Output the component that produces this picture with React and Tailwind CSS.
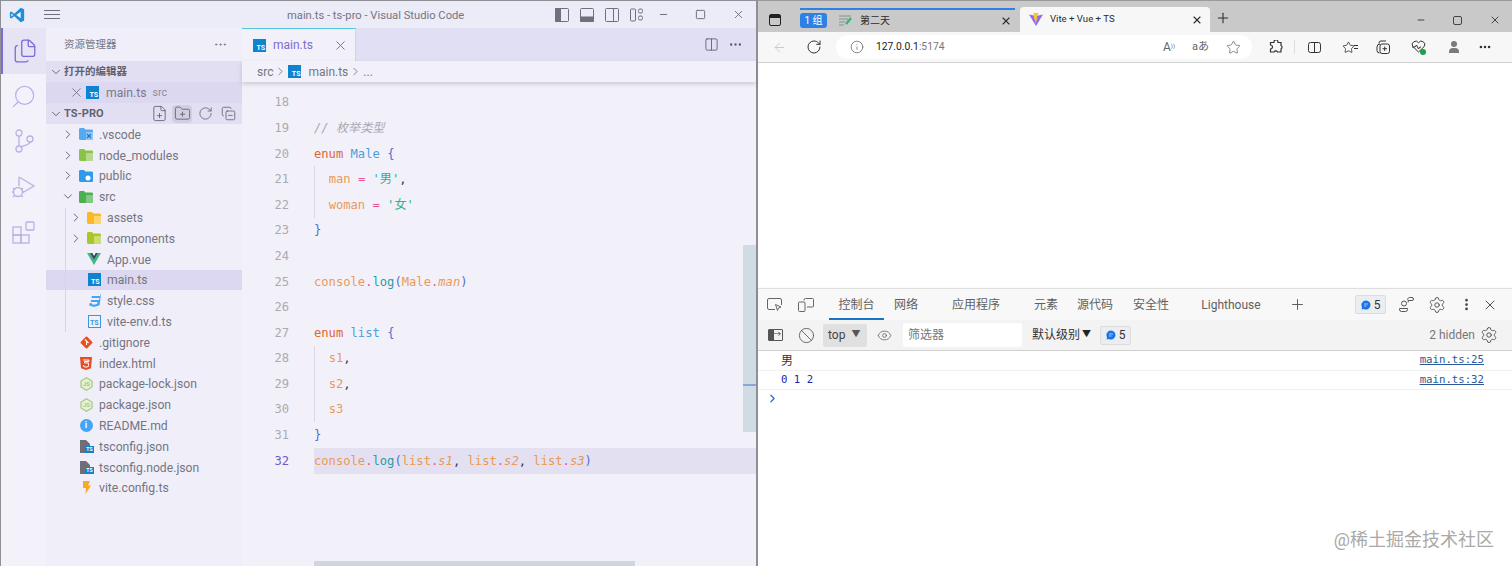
import {
  ArrowLeft, Ban, ChevronDown, ChevronRight, Columns2, CopyMinus, Ellipsis, EllipsisVertical, Eye,
  Files, FilePlus, FolderPlus, Info, Minus, MoreHorizontal, Plus, RotateCw, Search, Settings, Square, Star, X,
} from 'lucide-react';

const ui = { fontFamily: 'Roboto, "Noto Sans CJK SC", sans-serif' };
const mono = { fontFamily: '"DejaVu Sans Mono", "Noto Sans CJK SC", monospace' };

// ---- small drawn icons ----
const VsCodeLogo = () => (
  <svg width="16" height="16" viewBox="0 0 24 24">
    <path d="M17.5 1 8 10.2 3.4 6.7 1.3 7.8v8.4l2.1 1.1L8 13.8 17.5 23l5.2-2.2V3.2z" fill="#1f8fdc" />
    <path d="M17.5 7 11 12l6.5 5z" fill="#f2f1f9" />
    <path d="M3.5 9.2v5.6L6.3 12z" fill="#f2f1f9" />
  </svg>
);

const TsIcon = ({ outline }) => (
  <span
    className={`flex h-[13px] w-[13px] items-end justify-end pr-[1px] text-[7px] leading-[8px] font-bold ${
      outline ? 'border border-[#3a96dd] text-[#3a96dd]' : 'bg-[#0d84cf] text-white'
    }`}
  >
    TS
  </span>
);

const Folder = ({ color, tab, children }) => (
  <svg width="14" height="12" viewBox="0 0 14 12">
    <path d="M0 1.5C0 .7.5 0 1.3 0H5l1.4 1.6h6.2c.8 0 1.4.6 1.4 1.4v7.6c0 .8-.6 1.4-1.4 1.4H1.3C.5 12 0 11.4 0 10.6z" fill={color} />
    <path d="M7 4h7v6.6c0 .8-.6 1.4-1.4 1.4H7z" fill={tab} />
    {children}
  </svg>
);

const VueIcon = () => (
  <svg width="14" height="12" viewBox="0 0 14 12">
    <path d="M0 0h3l4 7 4-7h3L7 12z" fill="#41b883" />
    <path d="M3 0h2.3L7 3l1.7-3H11L7 7z" fill="#35495e" />
  </svg>
);

const CssIcon = () => (
  <svg width="13" height="13" viewBox="0 0 13 13">
    <path d="M1.5 0h11l-.4 2H3.800l-.3 2h8l-.4 2H3l-.3 2h6.800l-.3 1.800-3 .9-2.600-.8.1-1H1.600l-.4 2.600L6 13l5.600-1.800L13 0z" fill="#42a5f5" />
  </svg>
);

const GitIcon = () => (
  <svg width="13" height="13" viewBox="0 0 13 13">
    <rect x="2" y="2" width="9" height="9" rx="1" transform="rotate(45 6.5 6.500)" fill="#e6501f" />
    <path d="M5 3.500 8.500 7M6.500 5.500V9" stroke="#fff" strokeWidth="1.100" />
  </svg>
);

const HtmlIcon = () => (
  <svg width="12" height="13" viewBox="0 0 12 13">
    <path d="M0 0h12l-1 11.200L6 13 1 11.200z" fill="#e44d26" />
    <path d="M3 3h6l-.2 1.500H4.500l.1 1.500h4L8.300 9.500 6 10.200 3.700 9.500 3.600 8" fill="none" stroke="#fff" strokeWidth="1" />
  </svg>
);

const NodeIcon = () => (
  <svg width="13" height="14" viewBox="0 0 13 14">
    <path d="M6.500.8 12 4v6l-5.500 3.200L1 10V4z" fill="#e6efd8" stroke="#a6c97f" strokeWidth="1.200" />
    <text x="6.500" y="9.300" textAnchor="middle" fontSize="6" fontWeight="700" fill="#a6c97f">JS</text>
  </svg>
);

const ReadmeIcon = () => (
  <span className="flex h-[13px] w-[13px] items-center justify-center rounded-full bg-[#42a5f5] text-[9px] leading-none font-bold text-white">
    i
  </span>
);

const TsConfigIcon = () => (
  <span className="relative block h-[13px] w-[13px]">
    <svg width="10" height="13" viewBox="0 0 10 13">
      <path d="M0 0h6l4 4v9H0z" fill="#6e6e78" />
    </svg>
    <span className="absolute right-[-1px] bottom-0 bg-[#0d84cf] px-[1px] text-[5px] leading-[7px] font-bold text-white">TS</span>
  </span>
);

const BoltIcon = () => (
  <svg width="9" height="13" viewBox="0 0 9 13">
    <path d="M1 0h7L6 4.500h3L3.500 13 4 7H1z" fill="#f9a825" />
  </svg>
);

const SourceControl = () => (
  <svg width="26" height="26" viewBox="0 0 26 26" fill="none" stroke="#b9b0e6" strokeWidth="1.300">
    <circle cx="8" cy="5" r="3" />
    <circle cx="8" cy="21" r="3" />
    <circle cx="19" cy="11" r="3" />
    <path d="M8 8v10M19 14c0 3-5 3-10 5" />
  </svg>
);

const DebugIcon = () => (
  <svg width="26" height="26" viewBox="0 0 26 26" fill="none" stroke="#b9b0e6" strokeWidth="1.300">
    <path d="M8 3v9M8 3l15 9-11 6.500" />
    <circle cx="7" cy="18" r="4.500" />
    <path d="M2 14l2 2M12 14l-2 2M1 18h2M11 18h2M2 23l2-2M12 23l-2-2" />
  </svg>
);

const Extensions = () => (
  <svg width="24" height="24" viewBox="0 0 24 24" fill="none" stroke="#b9b0e6" strokeWidth="1.300">
    <rect x="1" y="6" width="8" height="8" />
    <rect x="1" y="14" width="8" height="8" />
    <rect x="9" y="14" width="8" height="8" />
    <rect x="14" y="1" width="8" height="8" rx="1" />
  </svg>
);

const LayoutIcon = ({ children }) => (
  <svg width="14" height="14" viewBox="0 0 14 14" fill="none" stroke="#6f6f7d" strokeWidth="1">
    <rect x=".5" y=".5" width="13" height="13" rx="1" />
    {children}
  </svg>
);

const ViteIcon = () => (
  <svg width="14" height="14" viewBox="0 0 14 14">
    <path d="M0 1.500 7 13 14 1.500 7 3z" fill="#8f6bf0" />
    <path d="M4.500 0 9.500 0 7.500 5.500l1.300-.2L6 11l.5-4.500-1.300.3z" fill="#fbc531" />
  </svg>
);

// ---- vs code sidebar ----
const tree = [
  { name: '.vscode', depth: 0, arrow: 'right', icon: <Folder color="#56a9ef" tab="#8fc6f3"><path d="M8 6l4 4M12 6l-4 4" stroke="#1976d2" strokeWidth="1.200" /></Folder> },
  { name: 'node_modules', depth: 0, arrow: 'right', icon: <Folder color="#8bc34a" tab="#b7d98f" /> },
  { name: 'public', depth: 0, arrow: 'right', icon: <Folder color="#2f9bea" tab="#2f9bea"><circle cx="9" cy="8" r="2.500" fill="#fff" /></Folder> },
  { name: 'src', depth: 0, arrow: 'down', icon: <Folder color="#4caf50" tab="#83c985" /> },
  { name: 'assets', depth: 1, arrow: 'right', icon: <Folder color="#fbb726" tab="#fdd56f" /> },
  { name: 'components', depth: 1, arrow: 'right', icon: <Folder color="#a9c72a" tab="#cdde70" /> },
  { name: 'App.vue', depth: 1, icon: <VueIcon /> },
  { name: 'main.ts', depth: 1, active: true, icon: <TsIcon /> },
  { name: 'style.css', depth: 1, icon: <CssIcon /> },
  { name: 'vite-env.d.ts', depth: 1, icon: <TsIcon outline /> },
  { name: '.gitignore', depth: 0, icon: <GitIcon /> },
  { name: 'index.html', depth: 0, icon: <HtmlIcon /> },
  { name: 'package-lock.json', depth: 0, icon: <NodeIcon /> },
  { name: 'package.json', depth: 0, icon: <NodeIcon /> },
  { name: 'README.md', depth: 0, icon: <ReadmeIcon /> },
  { name: 'tsconfig.json', depth: 0, icon: <TsConfigIcon /> },
  { name: 'tsconfig.node.json', depth: 0, icon: <TsConfigIcon /> },
  { name: 'vite.config.ts', depth: 0, icon: <BoltIcon /> },
];

const TreeRow = ({ row }) => (
  <div className={`flex h-[20.8px] items-center text-[12.200px] text-[#757582] ${row.active ? 'bg-[#dcd8f1]' : ''} ${row.depth ? 'pl-[23px]' : 'pl-[15px]'}`}>
    <span className="flex w-[14px] justify-center text-[#5f5f6d]">
      {row.arrow === 'right' && <ChevronRight size={15} strokeWidth={1.6} />}
      {row.arrow === 'down' && <ChevronDown size={15} strokeWidth={1.6} />}
    </span>
    <span className="mr-[6px] ml-[4px] flex w-[14px] items-center justify-center">{row.icon}</span>
    <span className="pt-[1px]">{row.name}</span>
  </div>
);

const Sidebar = () => (
  <aside className="w-[196px] shrink-0 bg-[#f0eff9]">
    <div className="flex h-[33px] items-center justify-between pr-[14px] pl-[18px] text-[10.500px] text-[#757582]">
      <span>资源管理器</span>
      <Ellipsis size={15} strokeWidth={1.6} />
    </div>
    <div className="flex h-[21px] items-center bg-[#e2dff3] pl-[3px] text-[10.500px] font-bold text-[#62626f]">
      <ChevronDown size={14} strokeWidth={1.6} className="mr-[1px]" />
      打开的编辑器
    </div>
    <div className="flex h-[21px] items-center bg-[#dcd8f1] pl-[23px] text-[12.200px] text-[#7a7a88]">
      <X size={15} strokeWidth={1.5} />
      <span className="mr-[7px] ml-[2px]"><TsIcon /></span>
      <span className="pt-[1px]">main.ts</span>
      <span className="ml-[6px] pt-[1px] text-[10.500px] text-[#8d8d99]">src</span>
    </div>
    <div className="flex h-[21px] items-center bg-[#e2dff3] pl-[3px] text-[11px] font-bold text-[#62626f]">
      <ChevronDown size={14} strokeWidth={1.6} className="mr-[1px]" />
      <span className="pt-[1px]">TS-PRO</span>
      <span className="ml-auto flex items-center gap-[3px] pr-[4px] text-[#5f5f6d]">
        <span className="flex h-[18px] w-[20px] items-center justify-center"><FilePlus size={17} strokeWidth={1.2} /></span>
        <span className="flex h-[18px] w-[20px] items-center justify-center rounded-[4px] bg-[#d0cee0]"><FolderPlus size={17} strokeWidth={1.2} /></span>
        <span className="flex h-[18px] w-[20px] items-center justify-center"><RotateCw size={15} strokeWidth={1.3} /></span>
        <span className="flex h-[18px] w-[20px] items-center justify-center"><CopyMinus size={15} strokeWidth={1.3} /></span>
      </span>
    </div>
    <div className="relative">
      {tree.map((row) => <TreeRow key={row.name} row={row} />)}
      <span className="absolute top-[84px] left-[19px] h-[124px] w-px bg-[#d6d5e0]" />
    </div>
  </aside>
);

// ---- vs code editor ----
const O = 'text-[#e99a57]';
const K = 'text-[#e0662e]';
const B = 'text-[#4c9fdc]';
const P = 'text-[#e8559a]';
const G = 'text-[#2bb48c]';
const L = 'text-[#4f6fd6]';
const T = 'text-[#2d9aa6]';
const D = 'text-[#3a3a4a]';

const log = (args) => (
  <>
    <span className={O}>console</span><span className={P}>.</span><span className={T}>log</span><span className={L}>(</span>
    {args}
    <span className={L}>)</span>
  </>
);

const member = (obj, prop) => (
  <>
    <span className={O}>{obj}</span><span className={P}>.</span><span className={`${O} italic`}>{prop}</span>
  </>
);

const lines = [
  { n: 18 },
  { n: 19, code: <span className="text-[#a8a8b4] italic">// 枚举类型</span> },
  { n: 20, code: <><span className={K}>enum</span> <span className={B}>Male</span> <span className={L}>{'{'}</span></> },
  { n: 21, guide: true, code: <>  <span className={O}>man</span> <span className={P}>=</span> <span className={G}>'男'</span><span className={D}>,</span></> },
  { n: 22, guide: true, code: <>  <span className={O}>woman</span> <span className={P}>=</span> <span className={G}>'女'</span></> },
  { n: 23, code: <span className={L}>{'}'}</span> },
  { n: 24 },
  { n: 25, code: log(member('Male', 'man')) },
  { n: 26 },
  { n: 27, code: <><span className={K}>enum</span> <span className={B}>list</span> <span className={L}>{'{'}</span></> },
  { n: 28, guide: true, code: <>  <span className={O}>s1</span><span className={D}>,</span></> },
  { n: 29, guide: true, code: <>  <span className={O}>s2</span><span className={D}>,</span></> },
  { n: 30, guide: true, code: <>  <span className={O}>s3</span></> },
  { n: 31, code: <span className={L}>{'}'}</span> },
  { n: 32, current: true, code: log(<>{member('list', 's1')}<span className={D}>, </span>{member('list', 's2')}<span className={D}>, </span>{member('list', 's3')}</>) },
];

const CodeLine = ({ line }) => (
  <div className="flex h-[25.6px] items-center text-[12.15px] whitespace-pre" style={mono}>
    <span className={`w-[47px] shrink-0 text-right ${line.current ? 'text-[#6a5acd]' : 'text-[#aaaab4]'}`}>{line.n}</span>
    <span className={`ml-[25px] flex h-full flex-1 items-center ${line.current ? 'bg-[#e3e0f2]' : ''} ${line.guide ? 'border-l border-[#d9d9e2]' : ''}`}>
      <span className={line.guide ? 'ml-[-1px]' : ''}>{line.code}</span>
    </span>
  </div>
);

const Editor = () => (
  <main className="relative flex min-w-0 flex-1 flex-col bg-[#f2f1f9]">
    <div className="flex h-[33px] shrink-0 items-center bg-[#e1dff3]">
      <div className="flex h-full w-[114px] items-center border-t border-r border-t-[#56c6dd] border-r-[#d4d1ea] bg-[#f2f1f9] pl-[11px] text-[12px] text-[#7c6bd6]">
        <TsIcon />
        <span className="ml-[7px] w-[39px]">main.ts</span>
        <X size={15} strokeWidth={1.6} className="ml-[21px]" />
      </div>
      <div className="ml-auto flex items-center gap-[9px] pr-[13px] text-[#5f5f6d]">
        <Columns2 size={15} strokeWidth={1.4} />
        <MoreHorizontal size={15} strokeWidth={1.8} />
      </div>
    </div>
    <div className="z-10 flex h-[21px] shrink-0 items-center bg-[#f2f1f9] pl-[15px] text-[12px] text-[#757582] shadow-[0_2px_4px_rgba(90,90,110,0.25)]">
      src
      <ChevronRight size={13} strokeWidth={1.6} className="mx-[1px]" />
      <TsIcon />
      <span className="ml-[7px]">main.ts</span>
      <ChevronRight size={13} strokeWidth={1.6} className="mx-[1px]" />
      ...
    </div>
    <div className="min-h-0 flex-1 overflow-hidden pt-[7.700px]">
      {lines.map((line) => <CodeLine key={line.n} line={line} />)}
    </div>
    <span className="absolute top-[217px] right-0 h-[187px] w-[13px] bg-[#cfdce4]" />
    <span className="absolute top-[356px] right-0 h-[2px] w-[13px] bg-[#8aa6d8]" />
    <span className="absolute bottom-0 left-[72px] h-[5px] w-[321px] bg-[#cfd6e0]" />
  </main>
);

const VsCode = () => (
  <section className="flex h-full w-[758px] shrink-0 flex-col border-t border-r-2 border-l border-[#8f8f96]" style={ui}>
    <header className="flex h-[27px] shrink-0 items-center bg-[#ecebf8] text-[11.200px] text-[#757582]">
      <span className="ml-[8px]"><VsCodeLogo /></span>
      <span className="ml-[19px] flex w-[16px] flex-col gap-[3px]">
        <i className="h-px bg-[#6e6e7c]" /><i className="h-px bg-[#6e6e7c]" /><i className="h-px bg-[#6e6e7c]" />
      </span>
      <span className="ml-[227px] w-[190px] pt-[3px] whitespace-nowrap">main.ts - ts-pro - Visual Studio Code</span>
      <span className="ml-[78px] flex items-center gap-[11px]">
        <LayoutIcon><path d="M.5.5h5v13h-5z" fill="#6f6f7d" /></LayoutIcon>
        <LayoutIcon><path d="M.5 9h13v4.500H.5z" fill="#6f6f7d" /></LayoutIcon>
        <LayoutIcon><path d="M8.500.5v13" /></LayoutIcon>
        <svg width="14" height="14" viewBox="0 0 14 14" fill="none" stroke="#6f6f7d">
          <rect x=".5" y="1" width="5" height="12" rx="1" />
          <rect x="8.500" y="1" width="4" height="4" rx="1.500" />
          <rect x="8.500" y="8" width="4" height="4" rx="1.500" />
        </svg>
      </span>
      <span className="ml-[14px] flex items-center gap-[26px] text-[#666672]">
        <Minus size={11} strokeWidth={2} />
        <Square size={11} strokeWidth={2} />
        <X size={13} strokeWidth={1.6} />
      </span>
    </header>
    <div className="flex min-h-0 flex-1">
      <nav className="flex w-[45px] shrink-0 flex-col items-center bg-[#f3f2fb]">
        <div className="flex h-[46px] w-full items-center justify-center border-l-2 border-[#7c6bd6] bg-[#e6e3f5]">
          <Files size={26} strokeWidth={1.2} className="text-[#7c6bd6]" />
        </div>
        <div className="flex h-[44px] items-center justify-center"><Search size={27} strokeWidth={1.1} className="-scale-x-100 text-[#b9b0e6]" /></div>
        <div className="flex h-[46px] items-center justify-center"><SourceControl /></div>
        <div className="flex h-[46px] items-center justify-center"><DebugIcon /></div>
        <div className="flex h-[46px] items-center justify-center"><Extensions /></div>
      </nav>
      <Sidebar />
      <Editor />
    </div>
  </section>
);

// ---- browser ----
const Browser = () => (
  <section className="flex h-full min-w-0 flex-1 flex-col bg-white" style={ui}>
    <div className="flex h-[32px] shrink-0 items-end border-t border-[#9a9a9a] bg-[#c9c9c9] text-[10px] text-[#2c2c2c]">
      <span className="mb-[6px] ml-[11px] flex h-[12px] w-[12px] flex-col rounded-[2px] border border-[#222]"><i className="h-[3px] bg-[#222]" /></span>
      <div className="relative mb-0 ml-[19px] flex h-[23px] w-[215px] items-center">
        <span className="absolute top-[-1px] right-0 left-0 h-[2px] bg-[#2f80e4]" />
        <span className="flex h-[15px] w-[27px] items-center justify-center rounded-[3px] bg-[#2f80e4] text-[10px] text-white">1 组</span>
        <svg width="14" height="12" viewBox="0 0 14 12" className="ml-[12px]" fill="none" stroke="#7a9a8a" strokeWidth="1.200">
          <path d="M0 1h12M0 4h9M0 7h6M0 10h5" />
          <path d="M12 3 7 9" stroke="#3cb371" strokeWidth="2.500" />
        </svg>
        <span className="ml-[7px]">第二天</span>
        <X size={12} strokeWidth={2.2} className="ml-auto mr-[3px]" />
      </div>
      <div className="ml-[5px] flex h-[25px] w-[190px] items-center rounded-t-[4px] bg-[#f7f7f7] pl-[9px]">
        <ViteIcon />
        <span className="ml-[7px] text-[9.600px]">Vite + Vue + TS</span>
        <X size={12} strokeWidth={2.2} className="ml-auto mr-[7px]" />
      </div>
      <Plus size={16} strokeWidth={1.6} className="mb-[6px] ml-[5px]" />
      <span className="mb-[6px] ml-auto flex items-center gap-[27px] pr-[11px] text-[#444]">
        <Minus size={10} strokeWidth={2.6} />
        <span className="h-[9px] w-[9px] rounded-[2px] border border-[#444]" />
        <X size={12} strokeWidth={2} />
      </span>
    </div>
    <div className="flex h-[31px] shrink-0 items-center border-b border-[#d0d0d0] bg-[#f7f7f7] text-[#4a4a4a]">
      <ArrowLeft size={15} strokeWidth={1.4} className="ml-[14px] text-[#c4c4c4]" />
      <RotateCw size={16} strokeWidth={1.500} className="ml-[19px] text-[#333]" />
      <div className="ml-[14px] flex h-[24px] w-[416px] items-center rounded-full bg-white pl-[14px] text-[10.300px]">
        <Info size={14} strokeWidth={1.3} className="text-[#666]" />
        <span className="ml-[12px] text-[#222]">127.0.0.1<span className="text-[#777]">:5174</span></span>
        <span className="ml-auto flex items-center gap-[17px] pr-[11px] text-[#666]">
          <span className="text-[12px]">A<sup className="text-[6px]">))</sup></span>
          <span className="text-[11px]">aあ</span>
          <Star size={15} strokeWidth={1.2} />
        </span>
      </div>
      <svg width="14" height="14" viewBox="0 0 14 14" className="ml-[17px]" fill="none" stroke="#333" strokeWidth="1.200">
        <path d="M5 1.500a2 2 0 0 1 4 1h3v3a2 2 0 0 1 0 3.500v3H8.500a2 2 0 0 0-3.500 0H1.500V9a2 2 0 0 0 0-4V2.500H5z" />
      </svg>
      <span className="ml-[11px] h-[14px] w-px bg-[#ddd]" />
      <svg width="13" height="13" viewBox="0 0 13 13" className="ml-[13px]" fill="none" stroke="#333">
        <rect x=".5" y="1.500" width="12" height="10" rx="2" />
        <path d="M6.500 1.500v10" />
      </svg>
      <span className="ml-[21px] flex items-center"><Star size={13} strokeWidth={1.500} className="text-[#333]" /><span className="ml-[-1px] flex w-[4px] flex-col gap-[2px]"><i className="h-px bg-[#333]" /><i className="h-px bg-[#333]" /></span></span>
      <svg width="14" height="14" viewBox="0 0 14 14" className="ml-[18px]" fill="none" stroke="#333">
        <path d="M3 3.500V3a2 2 0 0 1 2-2h5M1 7a3 3 0 0 1 3-3M3.500 13A2.500 2.500 0 0 1 1 10.500V7" />
        <rect x="4" y="4" width="9.500" height="9.500" rx="2" />
        <path d="M8.700 6.500v4.500M6.500 8.700H11" />
      </svg>
      <span className="relative ml-[21px] block h-[14px] w-[15px]">
        <svg width="15" height="13" viewBox="0 0 15 13" fill="none" stroke="#333">
          <path d="M7.500 12 1.800 6.500a3.300 3.300 0 0 1 5.700-3.800 3.300 3.300 0 0 1 5.700 3.800z" />
          <path d="M1 7h3l1.500-2 2 4 1.500-2h1" />
        </svg>
        <span className="absolute right-[0px] bottom-[-1px] h-[6px] w-[6px] rounded-full bg-[#16a34a]" />
      </span>
      <span className="ml-[23px] flex flex-col items-center"><i className="h-[6px] w-[6px] rounded-full bg-[#7a7a7a]" /><i className="mt-[1px] h-[5px] w-[10px] rounded-t-[4px] bg-[#7a7a7a]" /></span>
      <Ellipsis size={14} strokeWidth={2.4} className="ml-[19px] text-[#333]" />
    </div>
    <div className="min-h-0 flex-1 bg-white" />
    <Devtools />
  </section>
);

const MsgBadge = () => (
  <span className="flex h-[19px] w-[31px] items-center justify-center gap-[3px] rounded-[2px] border border-[#dcdcdc] bg-[#eaeef3] text-[12px] text-[#333]">
    <svg width="10" height="10" viewBox="0 0 10 10">
      <path d="M5 .5a4.500 4.500 0 1 1-2.300 8.400L.5 9.500l.6-2.200A4.500 4.500 0 0 1 5 .5z" fill="#1a73e8" />
      <path d="M3 4h4M3 6h2.500" stroke="#eaeef3" strokeWidth=".7" />
    </svg>
    5
  </span>
);

const tabs = [
  { label: '控制台', w: 'w-[55px]', ml: 'ml-[15px]', active: true },
  { label: '网络', w: 'w-[24px]', ml: 'ml-[10px]' },
  { label: '应用程序', w: 'w-[48px]', ml: 'ml-[34px]' },
  { label: '元素', w: 'w-[24px]', ml: 'ml-[34px]' },
  { label: '源代码', w: 'w-[36px]', ml: 'ml-[19px]' },
  { label: '安全性', w: 'w-[36px]', ml: 'ml-[20px]' },
  { label: 'Lighthouse', w: 'w-[58px]', ml: 'ml-[33px]' },
];

const Devtools = () => (
  <div className="h-[278px] shrink-0">
    <div className="flex h-[32px] items-center border-t border-[#dedede] bg-[#f8f8f8] text-[12px] text-[#5f5f5f] shadow-[0_1px_3px_rgba(0,0,0,0.12)]">
      <svg width="16" height="14" viewBox="0 0 16 14" className="ml-[9px]" fill="none" stroke="#666">
        <path d="M8 11.500H2a1.500 1.500 0 0 1-1.500-1.500V2A1.500 1.500 0 0 1 2 .5h11A1.500 1.500 0 0 1 14.500 2v5" />
        <path d="M8.500 6.500 14 9l-2.500 1-1 2.500z" />
      </svg>
      <svg width="16" height="14" viewBox="0 0 16 14" className="ml-[15px]" fill="none" stroke="#666">
        <path d="M6 2.500V2A1.500 1.500 0 0 1 7.500.5h7A1 1 0 0 1 15.500 2v6a1 1 0 0 1-1 1H9" />
        <rect x=".5" y="4" width="6.500" height="9.500" rx="1" />
      </svg>
      {tabs.map((t) => (
        <span key={t.label} className={`flex h-full items-center justify-center ${t.w} ${t.ml} ${t.active ? 'border-b-2 border-[#1a73c8] pt-[2px]' : ''}`}>
          {t.label}
        </span>
      ))}
      <Plus size={17} strokeWidth={1.4} className="ml-[29px]" />
      <span className="ml-[49px]"><MsgBadge /></span>
      <svg width="16" height="16" viewBox="0 0 16 16" className="ml-[12px]" fill="none" stroke="#555">
        <circle cx="6" cy="6.500" r="2.500" />
        <path d="M1.500 11.500h8v1a2 2 0 0 1-2 2h-4a2 2 0 0 1-2-2zM10 5.500l.5-2H14a1.500 1.500 0 0 0 0-3h-2.500a2 2 0 0 0-1.500 3" />
      </svg>
      <Settings size={18} strokeWidth={1.3} className="ml-[14px] text-[#555]" />
      <EllipsisVertical size={15} strokeWidth={2.4} className="ml-[13px] text-[#444]" />
      <X size={16} strokeWidth={1.4} className="ml-[8px] text-[#444]" />
    </div>
    <div className="flex h-[31px] items-center border-b border-[#cfcfcf] bg-[#f3f3f3] text-[12px] text-[#444]">
      <span className="ml-[10px] flex h-[12px] w-[15px] items-center justify-end rounded-[1px] border border-[#555] bg-[linear-gradient(90deg,#555_35%,transparent_35%)] pr-[1px] text-[8px] leading-none">→</span>
      <Ban size={17} strokeWidth={1.2} className="ml-[15px] text-[#555]" />
      <span className="ml-[8px] flex h-[23px] w-[44px] items-center rounded-[2px] bg-[#e0e0e0] pl-[5px] text-[#444]">
        top
        <span className="ml-[6px] text-[9px] text-[#555]">▼</span>
      </span>
      <Eye size={15} strokeWidth={1.3} className="ml-[10px] text-[#666]" />
      <span className="ml-[11px] flex h-[24px] w-[119px] items-center rounded-[2px] bg-white pl-[5px] text-[#777]">筛选器</span>
      <span className="ml-[10px] text-[#333]">默认级别</span>
      <span className="ml-[2px] text-[9px] text-[#222]">▼</span>
      <span className="ml-[9px]"><MsgBadge /></span>
      <span className="ml-auto text-[#777]">2 hidden</span>
      <Settings size={18} strokeWidth={1.3} className="mr-[14px] ml-[5px] text-[#555]" />
    </div>
    <div className="flex h-[20px] items-center justify-between border-b border-[#f0f0f0] pr-[28px] pl-[23px] text-[12px] text-[#333]">
      <span>男</span>
      <a className="text-[10.700px] text-[#2a5a9a] underline" style={mono}>main.ts:25</a>
    </div>
    <div className="flex h-[19px] items-center justify-between border-b border-[#f0f0f0] pr-[28px] pl-[23px] text-[10.700px]" style={mono}>
      <span className="text-[#1f1fa8]">0 1 2</span>
      <a className="text-[#2a5a9a] underline">main.ts:32</a>
    </div>
    <div className="flex h-[17px] items-center pl-[8px]">
      <ChevronRight size={13} strokeWidth={2.2} className="text-[#2a6ad0]" />
    </div>
  </div>
);

export default function App() {
  return (
    <div className="relative flex h-[566px] w-[1512px] overflow-hidden">
      <VsCode />
      <Browser />
      <span className="absolute right-[18px] bottom-[17px] text-[18px] leading-none text-[#a9a9a9]" style={ui}>@稀土掘金技术社区</span>
    </div>
  );
}
